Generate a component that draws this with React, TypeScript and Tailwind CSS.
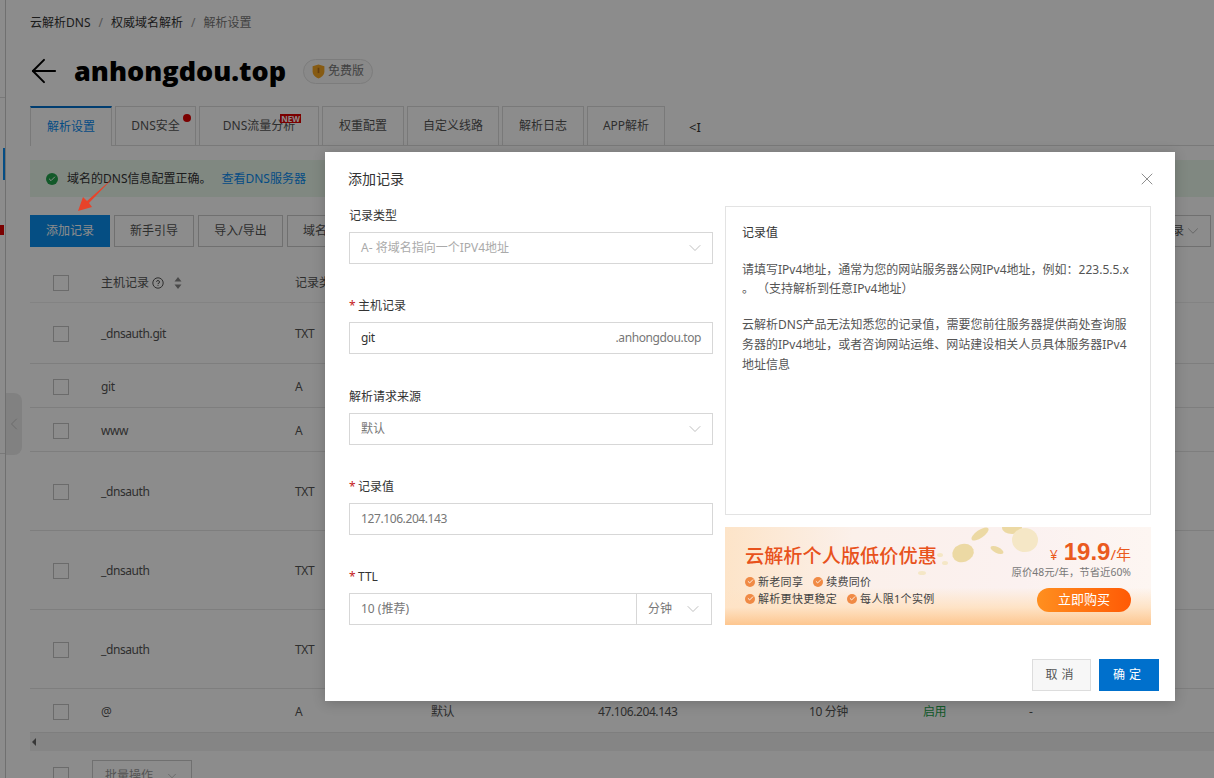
import { ChevronDown, ChevronLeft, X, ArrowLeft, Check } from "lucide-react";

const rows = [
  { h: 61, host: "_dnsauth.git", type: "TXT" },
  { h: 44, host: "git", type: "A" },
  { h: 44, host: "www", type: "A" },
  { h: 79, host: "_dnsauth", type: "TXT" },
  { h: 79, host: "_dnsauth", type: "TXT" },
  { h: 79, host: "_dnsauth", type: "TXT" },
  { h: 44, host: "@", type: "A", line: "默认", value: "47.106.204.143", ttl: "10 分钟", status: "启用", note: "-" },
];

const tabs = [
  { label: "解析设置", w: "w-[82px]", active: true },
  { label: "DNS安全", w: "w-[81px]", dot: true },
  { label: "DNS流量分析", w: "w-[120px]", isNew: true },
  { label: "权重配置", w: "w-[82px]" },
  { label: "自定义线路", w: "w-[92px]" },
  { label: "解析日志", w: "w-[82px]" },
  { label: "APP解析", w: "w-[78px]" },
];

function Checkbox() {
  return <span className="block w-4 h-4 border border-[#c4c4c4] bg-white" />;
}

function Tab({ label, w, active, dot, isNew }: { label: string; w: string; active?: boolean; dot?: boolean; isNew?: boolean }) {
  return (
    <div
      className={`relative flex items-center justify-center shrink-0 border-x border-[#ddd] ${w} ${
        active ? "h-[40px] border-t-2 border-t-[#0070cc] text-[#0a8cf0] bg-white" : "h-[39px] border-t border-t-[#ddd] text-[#555]"
      }`}
    >
      {label}
      {dot && <span className="absolute right-[4px] top-[7px] w-2 h-2 rounded-full bg-[#e00000]" />}
      {isNew && (
        <span className="absolute right-[17px] top-[7px] h-[9px] leading-[9px] px-[1px] bg-[#e00000] text-white text-[8px] font-bold">NEW</span>
      )}
    </div>
  );
}

function ToolButton({ label, w }: { label: string; w: string }) {
  return <button className={`h-8 shrink-0 border border-[#ccc] text-[#555] ${w}`}>{label}</button>;
}

function FieldLabel({ children, required }: { children: string; required?: boolean }) {
  return (
    <div className="flex items-center h-[18px] text-[#333] mb-[7px]">
      {required && <span className="text-[#c41a1a] w-[9px] text-[12px]">*</span>}
      {children}
    </div>
  );
}

function SelectBox({ text, disabled }: { text: string; disabled?: boolean }) {
  return (
    <div className="flex items-center justify-between h-8 w-full pl-[11px] pr-[7px] border border-[#d7d7d7]">
      <span className={disabled ? "text-[#aaa]" : "text-[#777]"}>{text}</span>
      <ChevronDown size={20} strokeWidth={0.9} className="text-[#aaa]" />
    </div>
  );
}

function Perk({ text }: { text: string }) {
  return (
    <span className="flex items-center gap-[3px] text-[11px] leading-[17px] tracking-[0.3px] text-[#444]">
      <span className="flex items-center justify-center w-[10px] h-[10px] rounded-full bg-[#f08a45]">
        <Check size={7} strokeWidth={3} className="text-white" />
      </span>
      {text}
    </span>
  );
}

function Banner() {
  return (
    <div className="relative h-[98px] overflow-hidden mt-3 bg-[linear-gradient(180deg,transparent_62%,#fee3c6_82%,#fdc68f_100%),linear-gradient(90deg,#fde4c8_0%,#fbf0ea_30%,#fbf1f0_70%,#fdf6f2_100%)]">
      <svg className="absolute left-[185px] top-0" width="130" height="60" viewBox="0 0 130 60">
        <g fill="#ecd9a4">
          <ellipse cx="53" cy="26" rx="11" ry="9" transform="rotate(-20 53 26)" />
          <ellipse cx="70" cy="7" rx="10" ry="4" transform="rotate(-35 70 7)" />
          <ellipse cx="87" cy="23" rx="7" ry="3" transform="rotate(25 87 23)" />
          <ellipse cx="102" cy="1" rx="10" ry="6" />
          <ellipse cx="115" cy="13" rx="13" ry="12" fill="#f5e7c6" />
          <ellipse cx="30" cy="28" rx="3" ry="2" fill="#f5e7c6" />
          <ellipse cx="35" cy="36" rx="3" ry="2" fill="#f5e7c6" />
          <ellipse cx="12" cy="46" rx="4" ry="2" fill="#f5e7c6" />
        </g>
      </svg>
      <div className="absolute left-5 top-[16px] text-[19.2px] leading-[26px] font-medium text-[#e8521c]">云解析个人版低价优惠</div>
      <div className="absolute left-5 top-[46px] flex flex-col gap-0">
        <div className="flex gap-[10px]">
          <Perk text="新老同享" />
          <Perk text="续费同价" />
        </div>
        <div className="flex gap-[10px]">
          <Perk text="解析更快更稳定" />
          <Perk text="每人限1个实例" />
        </div>
      </div>
      <div className="absolute right-[20px] top-[12px] flex flex-col items-end">
        <div className="flex items-baseline text-[#ea5a1e] leading-[26px] h-[27px]">
          <span className="text-[14px] mr-[6px]">¥</span>
          <span className="text-[24px] font-bold font-['Liberation_Sans',sans-serif]">19.9</span>
          <span className="text-[15px]">/年</span>
        </div>
        <div className="text-[10.4px] leading-[12px] text-[#777]">原价48元/年，节省近60%</div>
        <div className="flex items-center justify-center w-[94px] h-6 mt-[10px] rounded-full text-white text-[13px] bg-[linear-gradient(90deg,#ff8f1f,#ff5a05)]">立即购买</div>
      </div>
    </div>
  );
}

function Modal() {
  return (
    <div className="absolute left-[325px] top-[152px] w-[850px] h-[549px] bg-white flex flex-col shadow-[0_2px_12px_rgba(0,0,0,0.2)]">
      <div className="flex items-center justify-between h-[54px] pl-[23px] pr-[18px] text-[14px] text-[#333]">
        <span className="mb-[2px]">添加记录</span>
        <X size={20} strokeWidth={1} className="text-[#777]" />
      </div>
      <div className="flex gap-3 pl-6 pr-6 flex-1">
        <div className="w-[364px] shrink-0 pt-px">
          <div className="flex flex-col gap-[33px]">
            <div>
              <FieldLabel>记录类型</FieldLabel>
              <SelectBox text="A- 将域名指向一个IPV4地址" disabled />
            </div>
            <div>
              <FieldLabel required>主机记录</FieldLabel>
              <div className="flex items-center justify-between h-8 px-[11px] border border-[#d7d7d7] tracking-[-0.4px]">
                <span className="text-[#333]">git</span>
                <span className="text-[#777]">.anhongdou.top</span>
              </div>
            </div>
            <div className="mt-px">
              <FieldLabel>解析请求来源</FieldLabel>
              <SelectBox text="默认" />
            </div>
            <div>
              <FieldLabel required>记录值</FieldLabel>
              <div className="flex items-center h-8 px-[11px] border border-[#d7d7d7] text-[#777] tracking-[-0.4px]">127.106.204.143</div>
            </div>
            <div>
              <FieldLabel required>TTL</FieldLabel>
              <div className="flex h-8 w-[363px]">
                <div className="flex items-center flex-1 px-[11px] border border-[#d7d7d7] text-[#777]">10 (推荐)</div>
                <div className="flex items-center justify-between w-[75px] pl-[11px] pr-[8px] border border-l-0 border-[#d7d7d7] text-[#777]">
                  分钟
                  <ChevronDown size={20} strokeWidth={0.9} className="text-[#aaa]" />
                </div>
              </div>
            </div>
          </div>
        </div>
        <div className="w-[426px] shrink-0">
          <div className="h-[309px] border border-[#e3e3e3] px-4 pt-[16px] text-[#555]">
            <div className="text-[#333] leading-[19px] mb-[18px]">记录值</div>
            <p className="leading-[19px] mb-[17px]">请填写IPv4地址，通常为您的网站服务器公网IPv4地址，例如：223.5.5.x 。 （支持解析到任意IPv4地址）</p>
            <p className="leading-[20px]">云解析DNS产品无法知悉您的记录值，需要您前往服务器提供商处查询服务器的IPv4地址，或者咨询网站运维、网站建设相关人员具体服务器IPv4地址信息</p>
          </div>
          <Banner />
        </div>
      </div>
      <div className="flex justify-end gap-2 pr-4 pb-[10px]">
        <button className="w-[59px] h-8 border border-[#ddd] bg-[#f7f7f7] text-[#555] tracking-[4px]">取消</button>
        <button className="w-[60px] h-8 bg-[#0070cc] text-white tracking-[4px]">确定</button>
      </div>
    </div>
  );
}

export default function App() {
  return (
    <div className="relative w-[1214px] h-[778px] overflow-hidden bg-white text-[12px] font-['Noto_Sans','Noto_Sans_CJK_SC',sans-serif]">
      <div className="flex h-full">
        {/* collapsed side nav */}
        <div className="relative w-[6px] shrink-0 border-r border-[#ccc]">
          <span className="absolute left-[3px] top-[148px] w-[2px] h-8 bg-[#0a8cf0]" />
          <span className="absolute left-0 top-[225px] w-1 h-[10px] bg-[#e00000]" />
          <span className="absolute left-0 top-[97px] w-[5px] h-px bg-[#ddd]" />
          <span className="absolute left-0 top-[453px] w-[5px] h-px bg-[#ddd]" />
        </div>
        <div className="flex-1 min-w-0 pl-[24px] text-[#333]">
          <div className="flex items-center h-[14px] mt-[16px] gap-[8px] text-[#333]">
            <span>云解析DNS</span>
            <span className="text-[#999]">/</span>
            <span>权威域名解析</span>
            <span className="text-[#999]">/</span>
            <span className="text-[#777]">解析设置</span>
          </div>
          <div className="flex items-center h-[36px] mt-[23px]">
            <ArrowLeft size={38} strokeWidth={1.25} className="text-black -ml-[5px] shrink-0" />
            <h1 className="ml-[11px] text-[27px] leading-[36px] font-extrabold text-black font-['Open_Sans',sans-serif]">anhongdou.top</h1>
            <span className="flex items-center gap-[3px] ml-[17px] h-[25px] px-[8px] rounded-full border border-[#e2e2e2] bg-[#fafafa] text-[#777]">
              <svg width="13" height="15" viewBox="0 0 12 14">
                <path d="M6 0.5 L11.5 2 V7 C11.5 10.5 8.5 12.5 6 13.5 C3.5 12.5 0.5 10.5 0.5 7 V2 Z" fill="#f5a623" />
                <rect x="5.2" y="3.5" width="1.6" height="5" fill="#b5701a" />
              </svg>
              免费版
            </span>
          </div>
          <div className="flex items-start gap-[3px] h-[40px] mt-[17px] border-b border-[#ddd]">
            {tabs.map((t) => (
              <Tab key={t.label} {...t} />
            ))}
            <span className="ml-[21px] mt-[12px] text-[#333] text-[13px] leading-[18px]">&lt;I</span>
          </div>
          <div className="flex items-center h-[37px] mt-[14px] pl-[16px] bg-[#e9f7ec] text-[#333]">
            <span className="flex items-center justify-center w-3 h-3 rounded-full bg-[#22a34c] mr-[9px]">
              <Check size={8} strokeWidth={3} className="text-white" />
            </span>
            域名的DNS信息配置正确。
            <span className="ml-[10px] text-[#0a8cf0]">查看DNS服务器</span>
          </div>
          <div className="flex gap-1 mt-[18px] relative">
            <button className="w-20 h-8 bg-[#0a8fee] text-white">添加记录</button>
            <ToolButton label="新手引导" w="w-20" />
            <ToolButton label="导入/导出" w="w-[85px]" />
            <ToolButton label="域名设置" w="w-20" />
            <button className="absolute left-[1125px] flex items-center justify-between h-8 w-[56px] pl-1 pr-2 border border-[#ccc] text-[#555]">
              <span className="whitespace-nowrap">记录</span>
              <ChevronDown size={20} strokeWidth={0.9} className="text-[#999]" />
            </button>
          </div>
          <div className="mt-[16px]">
            <div className="flex items-center h-10 border-b border-[#eee] text-[#555]">
              <div className="w-[71px] pl-[23px]"><Checkbox /></div>
              <div className="w-[194px] flex items-center gap-[3px]">
                主机记录
                <svg width="12" height="12" viewBox="0 0 12 12" fill="none" stroke="#555">
                  <circle cx="6" cy="6" r="5.2" />
                  <path d="M4.5 4.8 A1.5 1.5 0 1 1 6 6.5 V7.2 M6 8.2 V9" />
                </svg>
                <svg className="ml-[7px]" width="8" height="12" viewBox="0 0 8 12" fill="#888">
                  <path d="M4 0 L7.5 4.5 H0.5 Z M4 12 L0.5 7.5 H7.5 Z" />
                </svg>
              </div>
              <div>记录类型</div>
            </div>
            {rows.map((r, i) => (
              <div key={i} style={{ height: r.h }} className="flex items-center pt-[2px] border-b border-[#e5e5e5] text-[#555] tracking-[-0.4px]">
                <div className="w-[71px] pl-[23px]"><Checkbox /></div>
                <div className="w-[194px]">{r.host}</div>
                <div className="w-[136px]">{r.type}</div>
                <div className="w-[167px]">{r.line}</div>
                <div className="w-[211px]">{r.value}</div>
                <div className="w-[114px]">{r.ttl}</div>
                <div className="w-[106px] text-[#22a34c]">{r.status}</div>
                <div>{r.note}</div>
              </div>
            ))}
            <div className="flex items-center h-[18px] pl-[2px] bg-[#f2f2f2]">
              <span className="w-0 h-0 border-y-[4px] border-y-transparent border-r-[4px] border-r-[#666]" />
            </div>
            <div className="flex items-start mt-[9px]">
              <div className="w-[62px] pl-[23px] pt-[7px]"><Checkbox /></div>
              <div className="flex items-center justify-center gap-3 w-[100px] h-8 border border-[#ccc] text-[#999]">
                批量操作
                <ChevronDown size={14} strokeWidth={1} />
              </div>
            </div>
          </div>
        </div>
      </div>
      {/* collapse handle */}
      <div className="absolute left-[6px] top-[393px] flex items-center w-[16px] h-[62px] rounded-r-lg bg-[#ececec]">
        <ChevronLeft size={20} strokeWidth={1} className="text-[#bbb] shrink-0 -ml-[2px]" />
      </div>
      {/* dialog mask */}
      <div className="absolute inset-0 bg-black/45" />
      <Modal />
      {/* red arrow drawn over the screenshot */}
      <svg className="absolute left-[74px] top-[176px]" width="42" height="36" viewBox="0 0 42 36">
        <path d="M39 2 L15 27 L18 31 L4 35 L9 21 L13 25 Z" fill="#e8432a" />
      </svg>
    </div>
  );
}
